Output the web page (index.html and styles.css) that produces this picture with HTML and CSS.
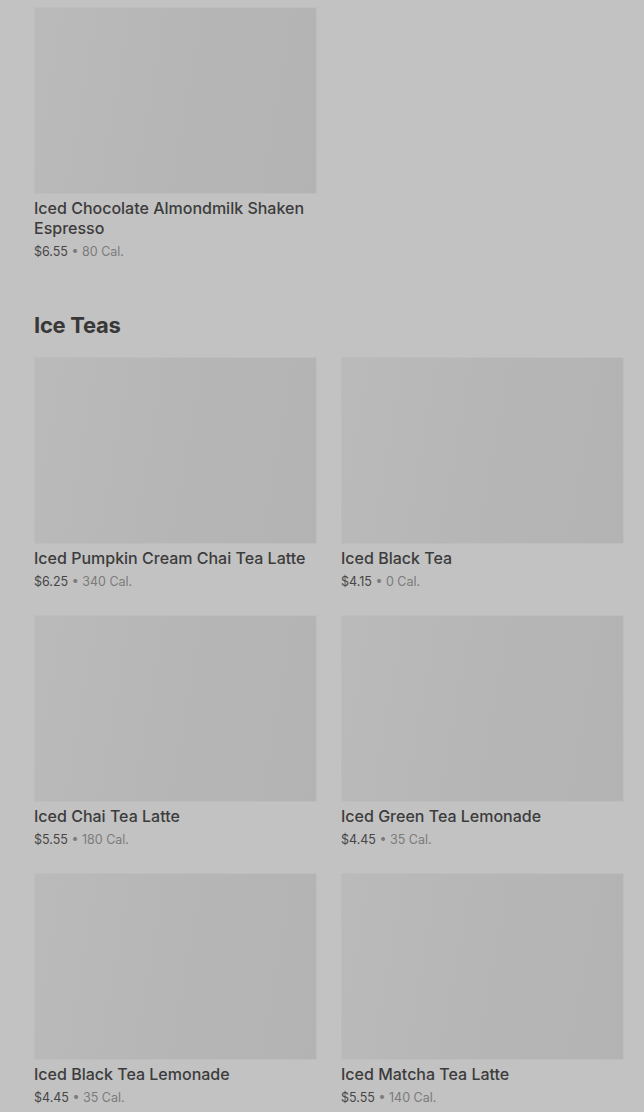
FILE: index.html
```html
<!DOCTYPE html>
<html lang="en">
<head>
    <meta charset="UTF-8">
    <meta name="viewport" content="width=device-width, initial-scale=1.0">
    <title>Menu</title>
    <link rel="stylesheet" href="styles.css">
</head>
<body>
    <main class="menu">
        <!-- Final da seção anterior -->
        <section class="section first">
            <div class="grid">
                <div class="item">
                    <div class="thumb"></div>
                    <div class="name">Iced Chocolate Almondmilk Shaken Espresso</div>
                    <div class="meta"><span class="price">$6.55</span> • 80 Cal.</div>
                </div>
            </div>
        </section>

        <section class="section">
            <h2 class="section-title">Ice Teas</h2>
            <div class="grid">
                <div class="item">
                    <div class="thumb"></div>
                    <div class="name">Iced Pumpkin Cream Chai Tea Latte</div>
                    <div class="meta"><span class="price">$6.25</span> • 340 Cal.</div>
                </div>
                <div class="item">
                    <div class="thumb"></div>
                    <div class="name">Iced Black Tea</div>
                    <div class="meta"><span class="price">$4.15</span> • 0 Cal.</div>
                </div>
                <div class="item">
                    <div class="thumb"></div>
                    <div class="name">Iced Chai Tea Latte</div>
                    <div class="meta"><span class="price">$5.55</span> • 180 Cal.</div>
                </div>
                <div class="item">
                    <div class="thumb"></div>
                    <div class="name">Iced Green Tea Lemonade</div>
                    <div class="meta"><span class="price">$4.45</span> • 35 Cal.</div>
                </div>
                <div class="item">
                    <div class="thumb"></div>
                    <div class="name">Iced Black Tea Lemonade</div>
                    <div class="meta"><span class="price">$4.45</span> • 35 Cal.</div>
                </div>
                <div class="item">
                    <div class="thumb"></div>
                    <div class="name">Iced Matcha Tea Latte</div>
                    <div class="meta"><span class="price">$5.55</span> • 140 Cal.</div>
                </div>
            </div>
        </section>
    </main>
</body>
</html>
```

FILE: styles.css
```css
body {
    margin: 0;
    background-color: #c2c2c2;
    font-family: Inter, "Noto Sans", sans-serif;
    color: #3a3a3a;
    overflow: hidden;
}

.menu {
    padding: 7px 20px 0 34px;
}

.section.first {
    margin-bottom: 49px;
}

.section-title {
    margin: 0 0 18px;
    font-size: 22px;
    line-height: 28px;
    font-weight: 700;
    letter-spacing: -0.3px;
    color: #383838;
}

/* Grade de produtos com duas colunas */
.grid {
    display: grid;
    grid-template-columns: 283px 283px;
    column-gap: 24px;
    row-gap: 23px;
}

.thumb {
    height: 187px;
    border: 1px solid #bdbdbd;
    box-sizing: border-box;
    background: linear-gradient(100deg, #bababa 0%, #b6b6b6 50%, #b3b3b3 100%);
}

.name {
    margin-top: 4px;
    font-size: 16px;
    line-height: 20px;
    font-weight: 500;
    color: #3c3c3c;
}

.meta {
    margin-top: 4px;
    font-size: 12.5px;
    line-height: 20px;
    color: #7b7b7b;
}

.meta .price {
    color: #464646;
}
```
